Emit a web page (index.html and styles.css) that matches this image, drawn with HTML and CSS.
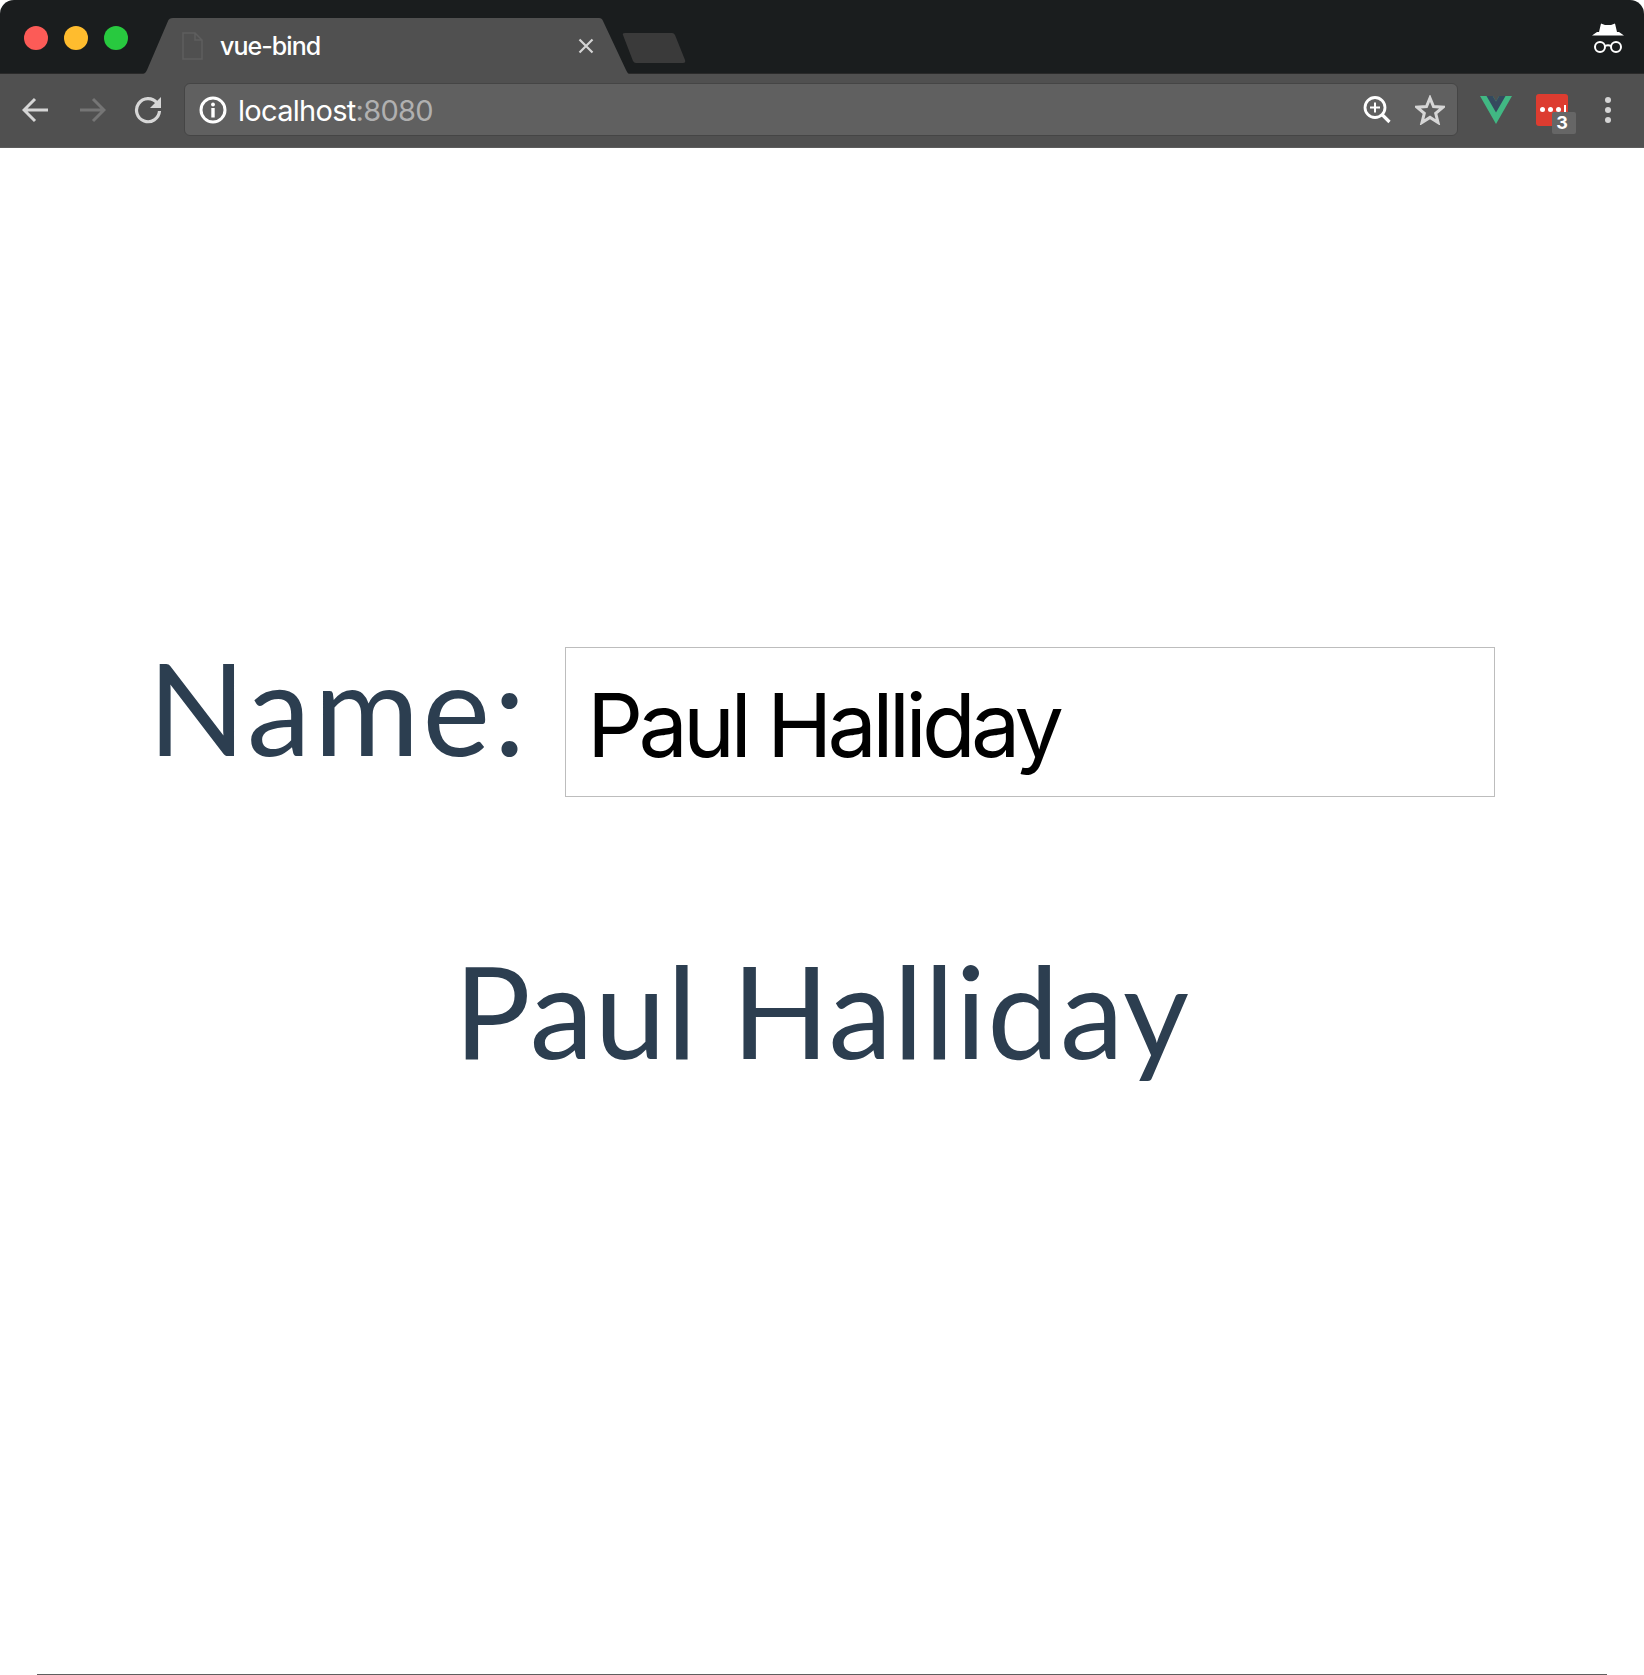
FILE: index.html
```html
<!DOCTYPE html>
<html lang="en">
<head>
    <meta charset="UTF-8">
    <title>vue-bind</title>
    <link rel="stylesheet" href="styles.css">
</head>
<body>
    <div class="window">
        <div class="tabstrip">
            <div class="traffic">
                <span class="light red"></span>
                <span class="light yellow"></span>
                <span class="light green"></span>
            </div>
            <div class="tab">
                <svg class="tab-shape" width="486" height="56" viewBox="0 0 486 56">
                    <path d="M0 56 Q2 56 4 52 L25 3 Q26 0 30 0 L456 0 Q459 0 460 3 L483 52 Q485 56 486 56 Z" fill="#505050"/>
                </svg>
                <svg class="file-icon" width="21" height="28" viewBox="0 0 21 28">
                    <path d="M1 1 H13 L20 8 V27 H1 Z M13 1 V8 H20" fill="none" stroke="#5e5e5e" stroke-width="1.5"/>
                </svg>
                <span class="tab-title">vue-bind</span>
                <svg class="tab-close" width="16" height="16" viewBox="0 0 16 16">
                    <path d="M1.5 1.5 L14.5 14.5 M14.5 1.5 L1.5 14.5" stroke="#d4d4d4" stroke-width="2.200"/>
                </svg>
            </div>
            <svg class="new-tab" width="64" height="30" viewBox="0 0 64 30">
                <path d="M1 2 Q0 0 3 0 L50 0 Q52 0 53 2 L63 27 Q64 30 61 30 L14 30 Q12 30 11 28 Z" fill="#3a3a3a"/>
            </svg>
            <svg class="incognito" width="32" height="32" viewBox="0 0 32 32">
                <path d="M9 1.500 L13 3 H19 L23 1.500 L25 10 H27 L32 13.500 H0 L5 10 H7 Z" fill="#fff"/>
                <circle cx="8" cy="25" r="5" fill="none" stroke="#fff" stroke-width="2"/>
                <circle cx="24" cy="25" r="5" fill="none" stroke="#fff" stroke-width="2"/>
                <path d="M13 24 Q16 22.500 19 24" fill="none" stroke="#fff" stroke-width="1.800"/>
            </svg>
        </div>

        <div class="toolbar">
            <button class="nav-btn">
                <svg width="28" height="26" viewBox="0 0 28 26"><path d="M26 13 H3 M13 2 L2 13 L13 24" fill="none" stroke="#d6d6d6" stroke-width="3"/></svg>
            </button>
            <button class="nav-btn">
                <svg width="28" height="26" viewBox="0 0 28 26"><path d="M2 13 H25 M15 2 L26 13 L15 24" fill="none" stroke="#757575" stroke-width="3"/></svg>
            </button>
            <button class="nav-btn">
                <svg width="28" height="28" viewBox="0 0 28 28">
                    <path d="M23 7 A11.500 11.500 0 1 0 25.500 15" fill="none" stroke="#d6d6d6" stroke-width="3.200"/>
                    <path d="M27 1 V12 H16 Z" fill="#d6d6d6"/>
                </svg>
            </button>
            <div class="omnibox">
                <svg class="info-icon" width="28" height="28" viewBox="0 0 28 28">
                    <circle cx="14" cy="14" r="12" fill="none" stroke="#fff" stroke-width="3"/>
                    <circle cx="14" cy="8.500" r="1.900" fill="#fff"/>
                    <rect x="12.300" y="12" width="3.400" height="9.500" fill="#fff"/>
                </svg>
                <span class="url">localhost<span class="url-port">:8080</span></span>
                <svg class="zoom-icon" width="28" height="28" viewBox="0 0 28 28">
                    <circle cx="12" cy="11.500" r="10" fill="none" stroke="#fff" stroke-width="2.800"/>
                    <path d="M12 6.500 V16.500 M7 11.500 H17" stroke="#fff" stroke-width="2"/>
                    <path d="M19 18.500 L26.500 26" stroke="#fff" stroke-width="3.200"/>
                </svg>
                <svg class="star-icon" width="30" height="30" viewBox="0 0 30 30">
                    <path d="M15 3 L18.500 11.500 L28 12.200 L20.700 18.300 L23 27.500 L15 22.400 L7 27.500 L9.300 18.300 L2 12.200 L11.500 11.500 Z" fill="none" stroke="#d6d6d6" stroke-width="3"/>
                </svg>
            </div>
            <div class="extensions">
                <svg class="vue-icon" width="32" height="28" viewBox="0 0 32 28">
                    <path d="M0 0 H12.800 L16 5.500 L19.200 0 H32 L16 28 Z" fill="#41b883"/>
                    <path d="M6.500 0 H12.800 L16 5.500 L19.200 0 H25.500 L16 16.500 Z" fill="#35495e"/>
                </svg>
                <div class="ext-badge-wrap">
                    <div class="ext-red">
                        <span class="dot"></span><span class="dot"></span><span class="dot"></span><span class="dot-tall"></span>
                    </div>
                    <span class="ext-count">3</span>
                </div>
                <div class="menu-dots">
                    <span></span><span></span><span></span>
                </div>
            </div>
        </div>

        <div class="page">
            <div class="field-row">
                <label class="name-label" for="name">Name:</label>
                <input class="name-input" id="name" type="text" value="Paul Halliday">
            </div>
            <h1 class="name-output">Paul Halliday</h1>
        </div>
        <div class="bottom-edge"></div>
    </div>
</body>
</html>
```

FILE: styles.css
```css
html, body {
    margin: 0;
    padding: 0;
    background: #fff;
}
.window {
    height: 1675px;
    display: flex;
    flex-direction: column;
    border-radius: 14px 14px 0 0;
    overflow: hidden;
}
.tabstrip {
    height: 74px;
    flex: none;
    display: flex;
    align-items: flex-start;
    background: #1a1d1e;
    box-sizing: border-box;
    border-bottom: 1px solid #2a2a2a;
}
.traffic {
    display: flex;
    gap: 16px;
    width: 143px;
    flex: none;
    box-sizing: border-box;
    padding: 26px 0 0 24px;
}
.light {
    width: 24px;
    height: 24px;
    border-radius: 50%;
}
.red { background: #fc5b57; }
.yellow { background: #ffbc2e; }
.green { background: #28c93f; }
.tab {
    position: relative;
    width: 486px;
    height: 56px;
    margin-top: 18px;
    flex: none;
    display: flex;
    align-items: center;
}
.tab-shape {
    position: absolute;
    left: 0;
    top: 0;
}
.file-icon {
    position: relative;
    margin: 0 0 0 39px;
}
.tab-title {
    position: relative;
    margin-left: 17px;
    color: #fff;
    font: 500 25px Inter, "Liberation Sans", sans-serif;
    letter-spacing: -0.95px;
    flex: 1;
}
.tab-close {
    position: relative;
    margin-right: 35px;
}
.new-tab {
    flex: none;
    margin: 33px 0 0 -7px;
}
.incognito {
    margin: 22px 20px 0 auto;
}
.toolbar {
    height: 74px;
    flex: none;
    display: flex;
    align-items: center;
    background: #505050;
    box-sizing: border-box;
    padding: 0 0 2px 22px;
    border-bottom: 1px solid #5c5c5c;
}
.nav-btn {
    width: 28px;
    height: 28px;
    margin-right: 28px;
    padding: 0;
    border: none;
    background: none;
    display: flex;
    align-items: center;
    justify-content: center;
}
.omnibox {
    width: 1274px;
    height: 53px;
    margin-left: -6px;
    flex: none;
    display: flex;
    align-items: center;
    box-sizing: border-box;
    padding: 0 12px 0 14px;
    background: #606060;
    border: 1px solid #454545;
    border-radius: 6px;
}
.info-icon { flex: none; }
.url {
    margin-left: 11px;
    padding-top: 2px;
    flex: 1;
    color: #fff;
    font: 29px Inter, "Liberation Sans", sans-serif;
    letter-spacing: -0.7px;
}
.url-port { color: #b0b0b0; }
.zoom-icon { margin-right: 24px; }
.extensions {
    flex: 1;
    display: flex;
    align-items: center;
    padding-left: 22px;
}
.vue-icon { flex: none; }
.ext-badge-wrap {
    position: relative;
    width: 32px;
    height: 32px;
    margin-left: 24px;
}
.ext-red {
    width: 32px;
    height: 32px;
    background: #dd3c30;
    border-radius: 3px;
    display: flex;
    align-items: center;
    gap: 3px;
    padding-left: 4px;
    box-sizing: border-box;
}
.dot {
    width: 5px;
    height: 5px;
    background: #fff;
    border-radius: 50%;
}
.dot-tall {
    width: 2px;
    height: 9px;
    background: #fff;
}
.ext-count {
    position: absolute;
    left: 16px;
    top: 18px;
    width: 24px;
    height: 22px;
    box-sizing: border-box;
    padding-right: 4px;
    background: #666;
    border-radius: 2px;
    color: #fff;
    font: bold 18px/22px Inter, "Liberation Sans", sans-serif;
    text-align: center;
}
.menu-dots {
    margin-left: 37px;
    display: flex;
    flex-direction: column;
    gap: 4px;
}
.menu-dots span {
    width: 6px;
    height: 6px;
    background: #d4d4d4;
    border-radius: 50%;
}
.page {
    flex: 1;
    background: #fff;
    display: flex;
    flex-direction: column;
    align-items: center;
    padding-top: 499px;
}
.field-row {
    align-self: flex-start;
    display: flex;
    align-items: flex-start;
    padding-left: 148px;
}
.name-label {
    width: 417px;
    flex: none;
    font: 400 128px/119px Lato, "Open Sans", sans-serif;
    letter-spacing: 3.300px;
    color: #2c3e50;
}
.name-input {
    width: 930px;
    height: 150px;
    box-sizing: border-box;
    padding: 6px 0 0 21px;
    border: 1px solid #bdbdbd;
    border-radius: 0;
    font: 88px Inter, "Liberation Sans", sans-serif;
    letter-spacing: -4.750px;
    color: #000;
    outline: none;
}
.name-output {
    margin: 138px 0 0;
    font: 400 128px/149px Lato, "Open Sans", sans-serif;
    letter-spacing: 1px;
    color: #2c3e50;
}
.bottom-edge {
    height: 1px;
    flex: none;
    margin: 0 37px;
    background: #5f5f5f;
}
```
